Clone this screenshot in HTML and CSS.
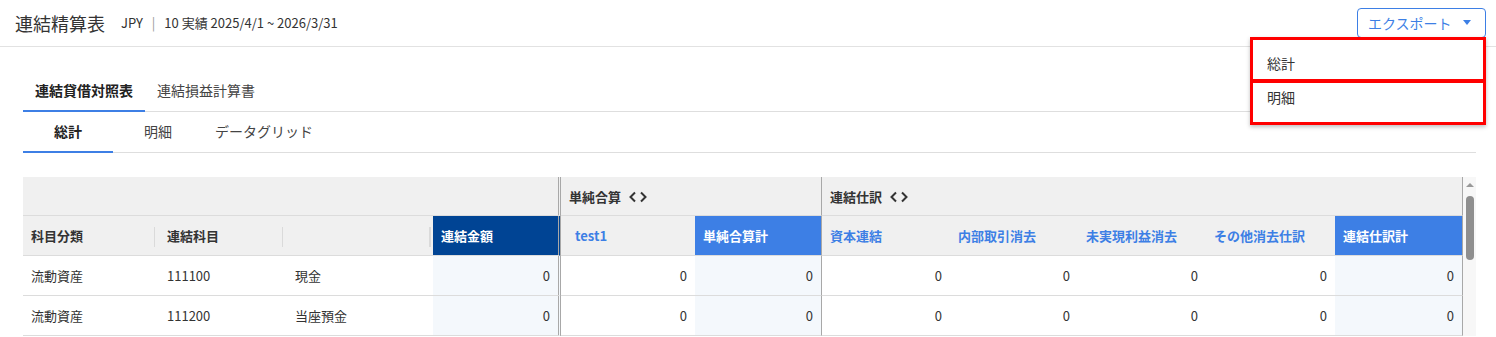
FILE: index.html
```html
<!DOCTYPE html>
<html>
<head>
  <title>連結精算表</title>
  <meta charset="utf-8">
  <link rel="stylesheet" href="styles.css">
</head>
<body>
  <div class="header">
    <div class="header-left">
      <h1>連結精算表</h1>
      <span class="meta">JPY <span class="bar">|</span> 10 実績 2025/4/1 ~ 2026/3/31</span>
    </div>
    <button class="export-btn">エクスポート <span class="caret"></span></button>
  </div>

  <div class="export-menu">
    <div class="menu-item first">総計</div>
    <div class="menu-item second">明細</div>
  </div>

  <div class="content">
    <div class="tabs main-tabs">
      <div class="tab active">連結貸借対照表</div>
      <div class="tab">連結損益計算書</div>
    </div>
    <div class="tabs sub-tabs">
      <div class="tab active">総計</div>
      <div class="tab">明細</div>
      <div class="tab">データグリッド</div>
    </div>

    <div class="grid-wrap">
      <table class="grid">
        <colgroup>
          <col style="width:132px"><col style="width:128px"><col style="width:150px"><col style="width:128px">
          <col style="width:134px"><col style="width:127px">
          <col style="width:128px"><col style="width:128px"><col style="width:128px"><col style="width:129px"><col style="width:128px">
        </colgroup>
        <thead>
          <tr class="group-row">
            <th colspan="4" class="end-double"></th>
            <th colspan="2" class="end-line">単純合算 <svg class="chev" width="18" height="12" viewBox="0 0 18 12"><polyline points="6,1.5 1.5,6 6,10.5"/><polyline points="12,1.5 16.5,6 12,10.5"/></svg></th>
            <th colspan="5" class="end-line">連結仕訳 <svg class="chev" width="18" height="12" viewBox="0 0 18 12"><polyline points="6,1.5 1.5,6 6,10.5"/><polyline points="12,1.5 16.5,6 12,10.5"/></svg></th>
          </tr>
          <tr class="col-row">
            <th class="first sep">科目分類</th>
            <th class="pad sep">連結科目</th>
            <th class="pad sep sep-in"></th>
            <th class="total-dark end-double">連結金額</th>
            <th class="link test">test1</th>
            <th class="total end-line">単純合算計</th>
            <th class="link">資本連結</th>
            <th class="link">内部取引消去</th>
            <th class="link">未実現利益消去</th>
            <th class="link">その他消去仕訳</th>
            <th class="total end-line">連結仕訳計</th>
          </tr>
        </thead>
        <tbody>
          <tr>
            <td class="first">流動資産</td><td class="pad">111100</td><td class="pad">現金</td>
            <td class="num shade end-double">0</td>
            <td class="num">0</td><td class="num shade end-line">0</td>
            <td class="num">0</td><td class="num">0</td><td class="num">0</td><td class="num">0</td><td class="num shade end-line">0</td>
          </tr>
          <tr>
            <td class="first">流動資産</td><td class="pad">111200</td><td class="pad">当座預金</td>
            <td class="num shade end-double">0</td>
            <td class="num">0</td><td class="num shade end-line">0</td>
            <td class="num">0</td><td class="num">0</td><td class="num">0</td><td class="num">0</td><td class="num shade end-line">0</td>
          </tr>
        </tbody>
      </table>
      <div class="vscroll">
        <div class="arrow-up"></div>
        <div class="thumb"></div>
      </div>
    </div>
  </div>
</body>
</html>
```

FILE: styles.css
```css
* {
  margin: 0;
  padding: 0;
  box-sizing: border-box;
}

body {
  font-family: "Noto Sans CJK JP", "Noto Sans", sans-serif;
  color: #333;
  background: #fff;
  width: 1496px;
  height: 337px;
  overflow: hidden;
  position: relative;
}

.header {
  height: 47px;
  border-bottom: 1px solid #e2e2e2;
  display: flex;
  align-items: center;
  justify-content: space-between;
  padding: 0 10px 0 15px;
}

.header-left {
  display: flex;
  align-items: center;
  gap: 16px;
  margin-top: -1px;
}

.header h1 {
  font-size: 18px;
  font-weight: 400;
  color: #333;
}

.meta {
  font-size: 13px;
  color: #333;
}

.meta .bar {
  color: #999;
  margin: 0 6px;
}

.export-btn {
  width: 129px;
  height: 30px;
  margin-top: -1px;
  border: 1px solid #3d7fe5;
  border-radius: 4px;
  background: #fff;
  color: #3d7fe5;
  font-family: inherit;
  font-size: 14px;
  text-align: left;
  padding: 0 14px 0 10px;
  display: flex;
  align-items: center;
  justify-content: space-between;
}

.caret {
  width: 0;
  height: 0;
  border-left: 4px solid transparent;
  border-right: 4px solid transparent;
  border-top: 5px solid #3d7fe5;
}

/* dropdown */
.export-menu {
  position: absolute;
  top: 37px;
  left: 1250px;
  width: 236px;
  height: 88px;
  background: #fff;
  border: 3px solid #f00;
  box-shadow: 0 2px 4px rgba(0, 0, 0, 0.25);
  z-index: 10;
}

.menu-item {
  height: 39px;
  font-size: 14px;
  line-height: 20px;
  padding-left: 14px;
  color: #333;
}

.menu-item.first {
  padding-top: 13px;
  border-bottom: 4px solid #f00;
  height: 43px;
}

.menu-item.second {
  padding-top: 4px;
}

/* tabs */
.content {
  padding: 24px 20px 0 23px;
}

.tabs {
  display: flex;
  border-bottom: 1px solid #dedede;
}

.tab {
  height: 41px;
  line-height: 38px;
  padding: 0 12px;
  font-size: 14px;
  color: #444;
  border-bottom: 2px solid transparent;
  margin-bottom: -1px;
  text-align: center;
}

.tab.active {
  font-weight: 700;
  color: #222;
  border-bottom-color: #3d7fe5;
}

.sub-tabs .tab {
  min-width: 90px;
}

/* grid */
.grid-wrap {
  display: flex;
  margin-top: 24px;
}

.grid {
  table-layout: fixed;
  width: 1440px;
  border-collapse: separate;
  border-spacing: 0;
  font-size: 13px;
}

.grid th, .grid td {
  height: 40px;
  border-bottom: 1px solid #dcdcdc;
  padding: 0 8px;
  white-space: nowrap;
  text-align: left;
  vertical-align: middle;
}

.grid th {
  background: #f0f0f0;
  font-weight: 700;
  color: #333;
  position: relative;
}

.group-row th {
  height: 39px;
}

.chev {
  vertical-align: -1px;
  margin-left: 5px;
  fill: none;
  stroke: #333;
  stroke-width: 2;
}

.grid .first {
  padding-left: 8px;
}

.grid .pad {
  padding-left: 12px;
}

.grid .test {
  padding-left: 14px;
}

.sep::after {
  content: '';
  position: absolute;
  right: -1px;
  top: 11px;
  width: 2px;
  height: 20px;
  background: #dadada;
}

.sep-in::after {
  right: 2px;
}

.grid .link {
  color: #3d7fe5;
}

.grid .total-dark {
  background: #004494;
  color: #fff;
}

.grid .total {
  background: #3d7fe5;
  color: #fff;
}

.end-double {
  border-right: 3px double #a8a8a8;
}

.end-line {
  border-right: 1px solid #a8a8a8;
}

.grid td {
  color: #333;
}

.grid .num {
  text-align: right;
  padding-right: 8px;
}

.grid .shade {
  background: #f4f8fc;
}

/* scrollbar */
.vscroll {
  width: 13px;
  background: #f7f7f7;
  padding-top: 6px;
  display: flex;
  flex-direction: column;
  align-items: center;
}

.arrow-up {
  width: 0;
  height: 0;
  border-left: 4px solid transparent;
  border-right: 4px solid transparent;
  border-bottom: 4px solid #999;
}

.thumb {
  margin-top: 9px;
  width: 8px;
  height: 64px;
  border-radius: 4px;
  background: #8f8f8f;
}
```
